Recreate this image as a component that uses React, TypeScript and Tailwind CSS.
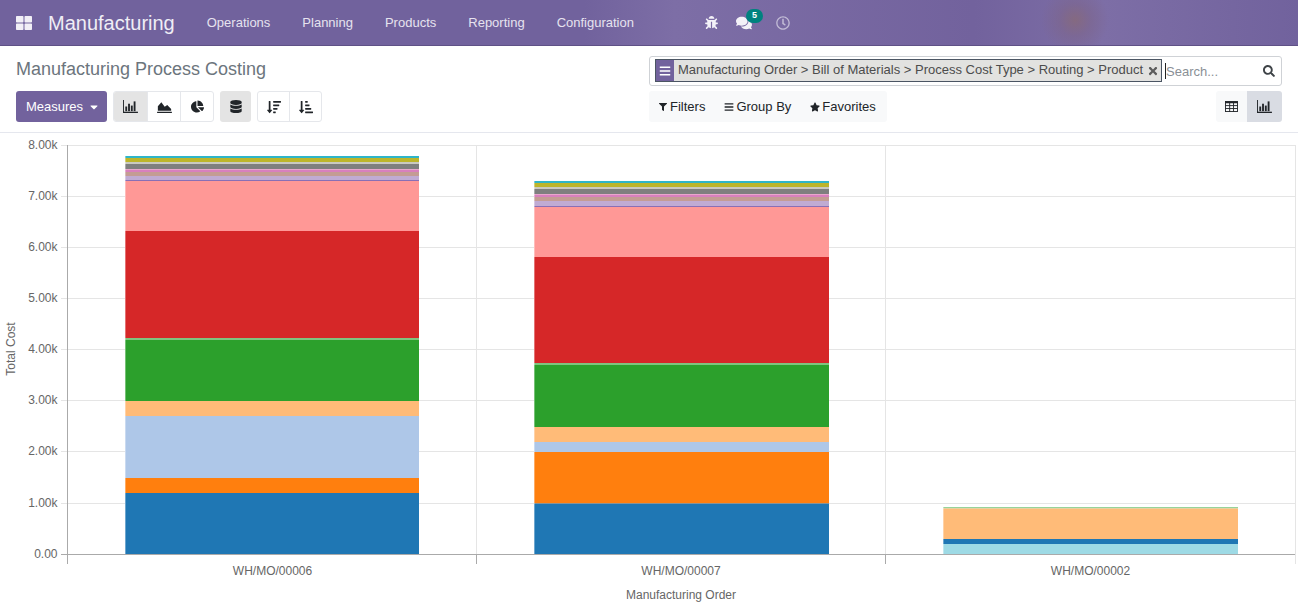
import React from "react";
import { FaBug, FaComments, FaThLarge, FaChartPie, FaDatabase, FaSortAmountDown, FaSortAmountDownAlt, FaBars, FaTimes, FaSearch, FaFilter, FaStar, FaCaretDown, FaRegClock } from "react-icons/fa";

const BarIcon = ({ className = "" }: { className?: string }) => (
  <svg viewBox="0 0 16 14" width="15" height="13" className={className} fill="currentColor">
    <rect x="0" y="0" width="1" height="14" />
    <rect x="0" y="12.6" width="16" height="1.4" />
    <rect x="2.4" y="7" width="2" height="5" />
    <rect x="5.4" y="4" width="2" height="8" />
    <rect x="8.4" y="6" width="2" height="6" />
    <rect x="11.4" y="1.5" width="2" height="10.5" />
  </svg>
);

const AreaIcon = () => (
  <svg viewBox="0 0 16 13" width="15" height="12" fill="currentColor">
    <path d="M0 11.6h16V13H0z" />
    <path d="M0.8 10.6V5.6L4.6 1.4 8.2 6.2 11 4.2 15.2 8.8v1.8z" />
  </svg>
);

const TableIcon = () => (
  <svg viewBox="0 0 14 12" width="13" height="11" fill="none" stroke="currentColor" strokeWidth="1">
    <rect x="0.5" y="0.5" width="13" height="11" />
    <path d="M0 1.5h14" strokeWidth="2" />
    <path d="M0 5h14M0 8.2h14M5 2v10M9.2 2v10" />
  </svg>
);

type Seg = { y0: number; y1: number; c: string };
const stripes = (o: number, extra: number): Seg[] => [
  { y0: o, y1: o + 2, c: "#2fb5c9" },
  { y0: o + 2, y1: o + 6, c: "#bdb52b" },
  { y0: o + 6, y1: o + 8, c: "#c9c9c0" },
  { y0: o + 8, y1: o + 13, c: "#7f7f7f" },
  { y0: o + 13, y1: o + 14, c: "#e9a6cc" },
  { y0: o + 14, y1: o + 16, c: "#d880bd" },
  { y0: o + 16, y1: o + 20, c: "#c49c94" },
  { y0: o + 20, y1: o + 24 + extra, c: "#c0abd3" },
  { y0: o + 24 + extra, y1: o + 25 + extra, c: "#8a6fb5" },
];

const bars: { x: number; w: number; segs: Seg[] }[] = [
  {
    x: 125,
    w: 294,
    segs: [
      ...stripes(156, 0),
      { y0: 181, y1: 231, c: "#ff9896" },
      { y0: 231, y1: 338, c: "#d62728" },
      { y0: 338, y1: 340, c: "#7fc47f" },
      { y0: 340, y1: 401, c: "#2ca02c" },
      { y0: 401, y1: 416, c: "#ffbb78" },
      { y0: 416, y1: 478, c: "#aec7e8" },
      { y0: 478, y1: 493, c: "#ff7f0e" },
      { y0: 493, y1: 554, c: "#1f77b4" },
    ],
  },
  {
    x: 534,
    w: 295,
    segs: [
      ...stripes(181, 1),
      { y0: 207, y1: 257, c: "#ff9896" },
      { y0: 257, y1: 363, c: "#d62728" },
      { y0: 363, y1: 365, c: "#7fc47f" },
      { y0: 365, y1: 427, c: "#2ca02c" },
      { y0: 427, y1: 442, c: "#ffbb78" },
      { y0: 442, y1: 452, c: "#aec7e8" },
      { y0: 452, y1: 503.5, c: "#ff7f0e" },
      { y0: 503.5, y1: 554, c: "#1f77b4" },
    ],
  },
  {
    x: 943,
    w: 295,
    segs: [
      { y0: 507, y1: 508.5, c: "#98d39a" },
      { y0: 508.5, y1: 539, c: "#ffbb78" },
      { y0: 539, y1: 544, c: "#1f77b4" },
      { y0: 544, y1: 554, c: "#9edae5" },
    ],
  },
];

const yTicks: [string, number][] = [
  ["0.00", 554],
  ["1.00k", 503],
  ["2.00k", 451],
  ["3.00k", 400],
  ["4.00k", 349],
  ["5.00k", 298],
  ["6.00k", 247],
  ["7.00k", 196],
  ["8.00k", 145],
];
const sans = "font-['Liberation_Sans',Arial,sans-serif]";

function Chart() {
  return (
    <svg width="1298" height="474" viewBox="0 133 1298 474" className="block" style={{ fontFamily: "'Liberation Sans', sans-serif" }}>
      {yTicks.map(([t, py], i) => {
        const y = py + 0.5;
        return (
          <g key={t}>
            <line x1="61" x2="1295" y1={y} y2={y} stroke={i === 0 ? "#aaaaaa" : "#e5e5e5"} />
            <text x="57.5" y={y + 3.5} textAnchor="end" fontSize="12" fill="#666666">{t}</text>
          </g>
        );
      })}
      {[476.5, 885.5, 1295.5].map((x) => (
        <line key={x} x1={x} x2={x} y1="145" y2="564" stroke="#e5e5e5" />
      ))}
      <line x1="67.5" x2="67.5" y1="145" y2="564" stroke="#aaaaaa" />
      <line x1="476.5" x2="476.5" y1="554" y2="564" stroke="#aaaaaa" />
      <line x1="885.5" x2="885.5" y1="554" y2="564" stroke="#aaaaaa" />
      {bars.map((b) => (
        <g key={b.x}>
          {b.segs.map((s) => (
            <rect key={s.y0} x={b.x} y={s.y0} width={b.w} height={s.y1 - s.y0} fill={s.c} />
          ))}
          <line x1={b.x + 0.5} x2={b.x + 0.5} y1={b.segs[0].y0} y2="554" stroke="#ffffff" strokeOpacity="0.35" />
        </g>
      ))}
      <text x="272.5" y="575" textAnchor="middle" fontSize="12" fill="#666666">WH/MO/00006</text>
      <text x="681" y="575" textAnchor="middle" fontSize="12" fill="#666666">WH/MO/00007</text>
      <text x="1090.5" y="575" textAnchor="middle" fontSize="12" fill="#666666">WH/MO/00002</text>
      <text x="681" y="599" textAnchor="middle" fontSize="12" fill="#666666">Manufacturing Order</text>
      <text transform="translate(15 349) rotate(-90)" textAnchor="middle" fontSize="12" fill="#666666">Total Cost</text>
    </svg>
  );
}

export default function App() {
  return (
    <div className={`w-[1298px] h-[607px] overflow-hidden bg-white ${sans}`}>
      <nav className="h-[46px] flex items-center border-b border-[#5f5186] text-white bg-[radial-gradient(circle_at_1075px_20px,rgba(135,105,120,0.8)_0px,rgba(125,100,135,0.5)_16px,rgba(115,96,155,0)_34px),linear-gradient(90deg,#71629d_0%,#71629d_45%,#7d6ea6_52%,#72629d_75%,#7d6ea6_85%,#71629d_100%)]">
        <FaThLarge className="ml-4 w-4 h-4 text-[#f1eff6]" />
        <span className="ml-4 text-[20px] text-[#efedf5]">Manufacturing</span>
        <div className="ml-4 flex text-[13px] text-[#e6e3ef]">
          <span className="px-4">Operations</span>
          <span className="px-4">Planning</span>
          <span className="px-4">Products</span>
          <span className="px-4">Reporting</span>
          <span className="px-4">Configuration</span>
        </div>
        <div className="ml-[55px] flex items-center">
          <FaBug className="w-[13px] h-[13px] text-[#f3f1f8]" />
          <div className="relative ml-[18px]">
            <FaComments className="w-[16px] h-[16px] text-[#f3f1f8]" />
            <span className="absolute -top-[6px] left-[10px] w-[17px] h-[14px] rounded-full bg-[#00827f] text-white text-[9px] font-bold flex items-center justify-center">5</span>
          </div>
          <FaRegClock className="ml-[24px] w-[14px] h-[14px] text-[#c2bbd6]" />
        </div>
      </nav>

      <header className="h-[87px] border-b border-[#e5e7ee] px-4 grid grid-cols-[633px_633px] justify-between">
        <div className="flex flex-col w-[400px]">
          <h1 className="mt-[10px] h-[26px] leading-[26px] text-[18px] text-[#6c757d]">Manufacturing Process Costing</h1>
          <div className="mt-[9px] flex gap-[6px] text-[13px]">
            <button className="w-[91px] h-[31px] pl-[10px] rounded-[3px] bg-[#72629d] text-white flex items-center gap-[5px]">
              Measures <FaCaretDown className="w-[12px] h-[12px]" />
            </button>
            <div className="flex h-[31px] rounded-[3px] border border-[#e5e7eb] overflow-hidden text-[#212529]">
              <span className="w-[34px] bg-[#e4e4e4] border-r border-[#e5e7eb] flex items-center justify-center"><BarIcon /></span>
              <span className="w-[33px] border-r border-[#e5e7eb] flex items-center justify-center"><AreaIcon /></span>
              <span className="w-[32px] flex items-center justify-center"><FaChartPie className="w-[13px] h-[13px]" /></span>
            </div>
            <span className="w-[31px] h-[31px] rounded-[3px] bg-[#e4e4e4] text-[#212529] flex items-center justify-center"><FaDatabase className="w-[12px] h-[13px]" /></span>
            <div className="flex h-[31px] rounded-[3px] border border-[#e5e7eb] overflow-hidden text-[#212529]">
              <span className="w-[32px] border-r border-[#e5e7eb] flex items-center justify-center"><FaSortAmountDown className="w-[14px] h-[14px]" /></span>
              <span className="w-[31px] flex items-center justify-center"><FaSortAmountDownAlt className="w-[14px] h-[14px]" /></span>
            </div>
          </div>
        </div>

        <div className="flex flex-col">
          <div className="mt-[10px] h-[30px] border border-[#cfd2d6] rounded-[3px] flex items-center pl-[5px] pr-[5px]">
            <div className="h-[23px] w-[507px] mb-[1px] border border-[#4b5563] bg-[#e2e2e0] flex items-center text-[13px] text-[#4c4c4c]">
              <span className="w-[18px] h-full bg-[#72629d] flex items-center justify-center text-white"><FaBars className="w-[12px] h-[12px]" /></span>
              <span className="ml-[4px] pb-[1px] whitespace-nowrap">Manufacturing Order &gt; Bill of Materials &gt; Process Cost Type &gt; Routing &gt; Product</span>
              <FaTimes className="ml-[4px] w-[12px] h-[12px] text-[#5c5c5c]" />
            </div>
            <span className="ml-[3px] w-px h-[16px] bg-[#222]" />
            <span className="text-[13px] text-[#8a8f96] mt-[1px]">Search...</span>
            <FaSearch className="ml-auto mr-[1px] w-[12px] h-[12px] text-[#3f4448]" />
          </div>
          <div className="mt-[5px] flex justify-between">
            <div className="h-[31px] w-[238px] rounded-[3px] bg-[#f8f9fa] flex items-center pl-[10px] text-[13px] text-[#212529]">
              <FaFilter className="w-[8px] h-[8px]" /><span className="ml-[3px]">Filters</span>
              <FaBars className="ml-[19px] w-[10px] h-[10px]" /><span className="ml-[2px]">Group By</span>
              <FaStar className="ml-[19px] w-[10px] h-[10px]" /><span className="ml-[2px]">Favorites</span>
            </div>
            <div className="h-[31px] flex rounded-[3px] overflow-hidden text-[#212529]">
              <span className="w-[31px] bg-[#f8f9fa] flex items-center justify-center"><TableIcon /></span>
              <span className="w-[35px] bg-[#d9dce3] flex items-center justify-center"><BarIcon /></span>
            </div>
          </div>
        </div>
      </header>

      <Chart />
    </div>
  );
}
